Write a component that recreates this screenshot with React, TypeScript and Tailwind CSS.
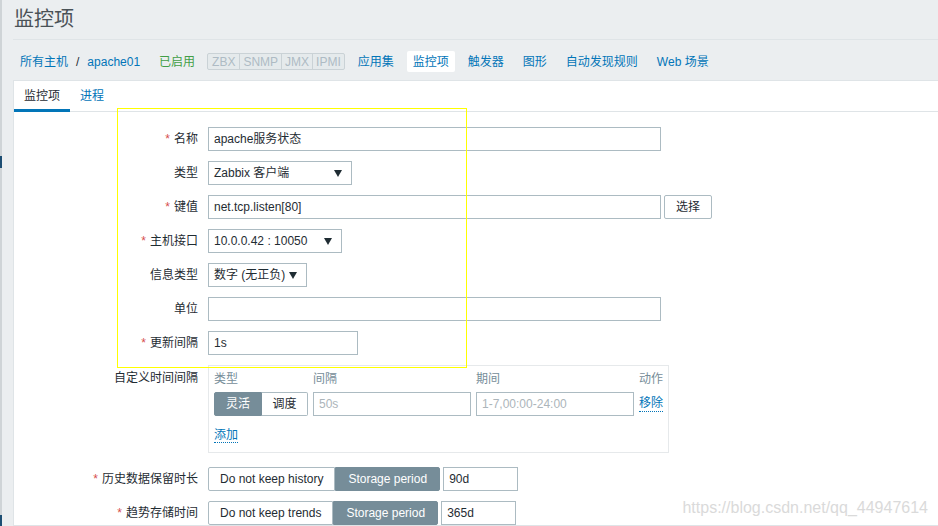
import React from 'react';

const LABEL = 'w-[184px] shrink-0 text-right text-[#1f2c33]';
const INPUT = 'h-[24px] border border-[#acbbc2] bg-white px-[5px] flex items-center text-[#1f2c33]';

function Req({ children }: { children: React.ReactNode }) {
    return (
        <span>
            <span className="text-[#d64e4e] mr-[4px]">*</span>
            {children}
        </span>
    );
}

function Arrow() {
    return (
        <svg width="8" height="7" viewBox="0 0 8 7" className="shrink-0">
            <path d="M0 0 H8 L4 7 Z" fill="#1f2c33" />
        </svg>
    );
}

function Select({ value, width }: { value: string; width: string }) {
    return (
        <div className={`${INPUT} ${width} justify-between gap-[4px] pr-[9px]`}>
            <span className="whitespace-nowrap">{value}</span>
            <Arrow />
        </div>
    );
}

function Row({ label, children }: { label: React.ReactNode; children: React.ReactNode }) {
    return (
        <div className="flex items-center gap-[10px]">
            <div className={LABEL}>{label}</div>
            {children}
        </div>
    );
}

function Storage({ off, value }: { off: string; value: string }) {
    return (
        <div className="flex items-center gap-[3px]">
            <div className="flex h-[24px]">
                <span className="flex items-center rounded-l-[2px] border border-[#acbbc2] px-[11px] text-[#1f2c33]">{off}</span>
                <span className="flex items-center rounded-r-[2px] border border-[#768d99] bg-[#768d99] px-[12px] text-white">Storage period</span>
            </div>
            <div className={`${INPUT} w-[75px]`}>{value}</div>
        </div>
    );
}

const NAV = ['应用集', '监控项', '触发器', '图形', '自动发现规则', 'Web 场景'];

export default function App() {
    return (
        <div className="relative flex h-[526px] w-[938px] overflow-hidden bg-[#ebeef0] text-[12px] font-['Liberation_Sans','Noto_Sans_CJK_SC',sans-serif]">
            {/* sidebar edge */}
            <div className="flex w-[2px] shrink-0 flex-col bg-[#cfd4d7]">
                <div className="h-[156px]" />
                <div className="h-[12px] bg-[#1d4e73]" />
                <div className="flex-1" />
                <div className="h-[11px] bg-[#1d4e73]" />
            </div>

            <div className="flex min-w-0 flex-1 flex-col pl-[11px]">
                {/* header */}
                <div className="flex h-[40px] shrink-0 items-center border-b border-[#dfe4e7] pl-px pb-[2px]">
                    <h1 className="text-[20px] font-normal text-[#4a5257]">监控项</h1>
                </div>

                {/* host nav */}
                <div className="flex h-[40px] shrink-0 items-center pl-[7px] pt-[3px]">
                    <a className="text-[#0275b8]">所有主机</a>
                    <span className="mx-[8px] text-[#1f2c33]">/</span>
                    <a className="text-[#0275b8]">apache01</a>
                    <span className="ml-[19px] text-[#429e47]">已启用</span>
                    <div className="ml-[12px] flex h-[17px] items-stretch rounded-[2px] border border-[#cad2d6] bg-[#e5eaec] text-[#aebbc4]">
                        <span className="flex items-center px-[4px]">ZBX</span>
                        <span className="flex items-center border-l border-[#cad2d6] px-[3px]">SNMP</span>
                        <span className="flex items-center border-l border-[#cad2d6] px-[3px]">JMX</span>
                        <span className="flex items-center border-l border-[#cad2d6] px-[3px]">IPMI</span>
                    </div>
                    <div className="ml-[7px] flex items-center gap-[7px]">
                        {NAV.map((n) => (
                            <span
                                key={n}
                                className={
                                    n === '监控项'
                                        ? 'flex h-[21px] items-center rounded-[2px] bg-white px-[6px] text-[#0275b8]'
                                        : 'px-[6px] text-[#0275b8]'
                                }
                            >
                                {n}
                            </span>
                        ))}
                    </div>
                </div>

                {/* panel */}
                <div className="flex-1 border border-r-0 border-[#dfe4e7] bg-white">
                    <div className="flex h-[31px] items-stretch border-b border-[#dfe4e7]">
                        <span className="flex items-center border-b-[3px] border-[#0275b8] px-[10px] pt-[2px] text-[#1f2c33] mb-[-1px]">监控项</span>
                        <span className="flex items-center px-[10px] text-[#0275b8]">进程</span>
                    </div>

                    <div className="flex flex-col gap-[10px] pt-[15px]">
                        <Row label={<Req>名称</Req>}>
                            <div className={`${INPUT} w-[453px]`}>apache服务状态</div>
                        </Row>
                        <Row label="类型">
                            <Select value="Zabbix 客户端" width="w-[144px]" />
                        </Row>
                        <Row label={<Req>键值</Req>}>
                            <div className="flex items-center gap-[3px]">
                                <div className={`${INPUT} w-[453px]`}>net.tcp.listen[80]</div>
                                <button className="flex h-[24px] w-[48px] items-center justify-center rounded-[2px] border border-[#acbbc2] bg-white text-[#1f2c33]">
                                    选择
                                </button>
                            </div>
                        </Row>
                        <Row label={<Req>主机接口</Req>}>
                            <Select value="10.0.0.42 : 10050" width="w-[134px]" />
                        </Row>
                        <Row label="信息类型">
                            <Select value="数字 (无正负)" width="w-[99px]" />
                        </Row>
                        <Row label="单位">
                            <div className={`${INPUT} w-[453px]`} />
                        </Row>
                        <Row label={<Req>更新间隔</Req>}>
                            <div className={`${INPUT} w-[150px]`}>1s</div>
                        </Row>

                        {/* custom intervals */}
                        <div className="flex items-start gap-[10px]">
                            <div className={`${LABEL} pt-[4px]`}>自定义时间间隔</div>
                            <div className="w-[461px] border border-[#e6e9eb] px-[5px] pt-[4px] pb-[8px]">
                                <div className="grid grid-cols-[94px_158px_158px_1fr] gap-x-[5px] leading-[18px] text-[#768d99]">
                                    <span>类型</span>
                                    <span>间隔</span>
                                    <span>期间</span>
                                    <span className="text-right">动作</span>
                                </div>
                                <div className="mt-[4px] grid grid-cols-[94px_158px_158px_1fr] items-center gap-x-[5px]">
                                    <div className="flex h-[24px]">
                                        <span className="flex items-center rounded-l-[2px] border border-[#768d99] bg-[#768d99] px-[11px] text-white">灵活</span>
                                        <span className="flex flex-1 items-center justify-center rounded-r-[2px] border border-l-0 border-[#acbbc2] text-[#1f2c33]">调度</span>
                                    </div>
                                    <div className={`${INPUT} !text-[#acb5ba]`}>50s</div>
                                    <div className={`${INPUT} !text-[#acb5ba]`}>1-7,00:00-24:00</div>
                                    <span className="border-b border-dotted border-[#0275b8] leading-[15px] text-[#0275b8]">移除</span>
                                </div>
                                <div className="mt-[10px] leading-[18px]">
                                    <span className="border-b border-dotted border-[#0275b8] text-[#0275b8]">添加</span>
                                </div>
                            </div>
                        </div>

                        <div className="mt-[4px] flex flex-col gap-[10px]">
                            <Row label={<Req>历史数据保留时长</Req>}>
                                <Storage off="Do not keep history" value="90d" />
                            </Row>
                            <Row label={<Req>趋势存储时间</Req>}>
                                <Storage off="Do not keep trends" value="365d" />
                            </Row>
                        </div>
                    </div>
                </div>
            </div>

            {/* annotation box */}
            <div className="pointer-events-none absolute left-[117px] top-[108px] h-[260px] w-[350px] border border-[#ffff00]" />

            {/* watermark */}
            <div className="pointer-events-none absolute bottom-[6px] right-[10px] text-[16px] text-[#dadada]">
                https://blog.csdn.net/qq_44947614
            </div>
        </div>
    );
}
